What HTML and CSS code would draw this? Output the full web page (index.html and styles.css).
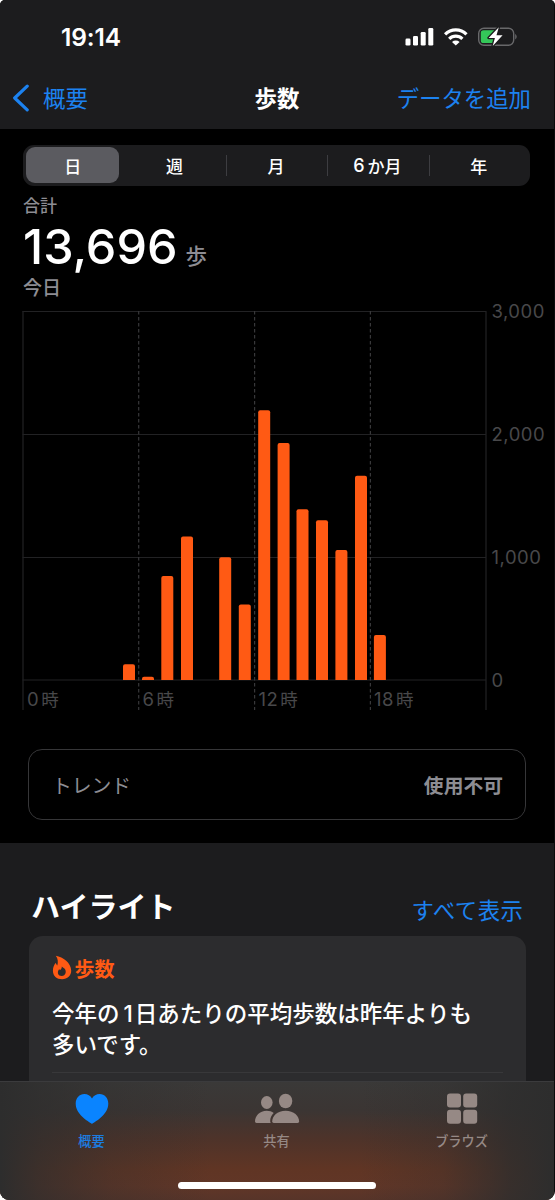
FILE: index.html
```html
<!DOCTYPE html>
<html lang="ja">
<head>
<meta charset="utf-8">
<meta name="viewport" content="width=device-width, initial-scale=1">
<title>歩数</title>
<link rel="stylesheet" href="styles.css">
</head>
<body>
<div class="app">
  <header class="header">
    <div class="status">
      <span class="clock">19:14</span>
      <svg class="status-icons" width="112" height="22" viewBox="405 26 112 22">
        <g fill="#fff">
          <rect x="405.5" y="38.6" width="5" height="7" rx="1.3"/>
          <rect x="413" y="36" width="5" height="9.600" rx="1.3"/>
          <rect x="420.700" y="32" width="5" height="13.600" rx="1.3"/>
          <rect x="428.300" y="28" width="5" height="17.600" rx="1.3"/>
        </g>
        <g fill="none" stroke="#fff" stroke-width="3.200">
          <path d="M445.100 34.300a15.300 15.300 0 0 1 21.400 0"/>
          <path d="M449.200 38.900a9.400 9.400 0 0 1 13.200 0"/>
        </g>
        <path d="M455.800 45.600l-3.800-3.700a5.600 5.600 0 0 1 7.600 0z" fill="#fff"/>
        <rect x="478.700" y="28.200" width="35" height="17" rx="5.200" fill="none" stroke="#68686a" stroke-width="1.400"/>
        <path d="M515.200 33.800q3 2.900 0 5.800z" fill="#68686a"/>
        <path d="M483.500 30.300h10.500v12.800h-10.500a2.700 2.700 0 0 1-2.700-2.700v-7.400a2.700 2.700 0 0 1 2.700-2.700z" fill="#34c759"/>
        <path d="M498.800 27.200l-10.200 10.700h6.300l-2.200 8 9.900-10.700h-6.100z" fill="#fff" stroke="#1c1c1e" stroke-width="2.600" paint-order="stroke" stroke-linejoin="round"/>
      </svg>
    </div>
    <nav class="navbar">
      <a class="back">
        <svg width="18" height="28" viewBox="0 0 18 28" fill="none" stroke="#1c82f0" stroke-width="3.200" stroke-linecap="round" stroke-linejoin="round"><path d="M15.200 2.200L2.700 14l12.500 11.800"/></svg>
        <span>概要</span>
      </a>
      <h1 class="title">歩数</h1>
      <a class="add">データを追加</a>
    </nav>
  </header>

  <main class="summary">
    <div class="segments">
      <span class="segment selected">日</span>
      <span class="segment">週</span>
      <span class="segment divided">月</span>
      <span class="segment divided"><span class="six">6</span>か月</span>
      <span class="segment divided">年</span>
    </div>
    <div class="total">
      <div class="total-label">合計</div>
      <div class="total-value"><span class="number">13,696</span><span class="unit">歩</span></div>
      <div class="total-date">今日</div>
    </div>

    <svg class="chart" width="554" height="417" viewBox="0 298 554 417">
      <g class="grid">
        <path d="M22.500 311.500H486M22.500 434.500H486M22.500 557.500H486M22.500 680H486"/>
        <path d="M23 311v399M486 311v399"/>
        <path class="dashed" d="M138.700 311v399M254.600 311v399M370.400 311v399"/>
      </g>
      <g class="bars">
        <path d="M123 680v-13.800q0-2 2-2h8q2 0 2 2v13.800z"/>
        <path d="M142 680v-1.200q0-2 2-2h8q2 0 2 2v1.200z"/>
        <path d="M161.300 680v-102q0-2 2-2h8q2 0 2 2v102z"/>
        <path d="M181 680v-141.500q0-2 2-2h8q2 0 2 2v141.500z"/>
        <path d="M219.200 680v-120.800q0-2 2-2h8q2 0 2 2v120.800z"/>
        <path d="M238.800 680v-73.500q0-2 2-2h8q2 0 2 2v73.500z"/>
        <path d="M258.200 680v-267.700q0-2 2-2h8q2 0 2 2v267.700z"/>
        <path d="M277.600 680v-235q0-2 2-2h8q2 0 2 2v235z"/>
        <path d="M296.500 680v-168.700q0-2 2-2h8q2 0 2 2v168.700z"/>
        <path d="M316 680v-157.800q0-2 2-2h8q2 0 2 2v157.800z"/>
        <path d="M335.400 680v-128q0-2 2-2h8q2 0 2 2v128z"/>
        <path d="M355 680v-202.200q0-2 2-2h8q2 0 2 2v202.200z"/>
        <path d="M373.900 680v-43q0-2 2-2h8q2 0 2 2v43z"/>
      </g>
      <g class="axis">
        <text x="491.500" y="318.300">3,000</text>
        <text x="491.500" y="441.300">2,000</text>
        <text x="491.500" y="564.300">1,000</text>
        <text x="491.500" y="687.300">0</text>
        <text x="27" y="705.500">0<tspan class="hour" dx="2">時</tspan></text>
        <text x="142.500" y="705.500">6<tspan class="hour" dx="2">時</tspan></text>
        <text x="258.500" y="705.500">12<tspan class="hour" dx="2">時</tspan></text>
        <text x="374" y="705.500">18<tspan class="hour" dx="2">時</tspan></text>
      </g>
    </svg>

    <div class="trend"><span>トレンド</span><strong>使用不可</strong></div>
  </main>

  <section class="highlights">
    <div class="section-head"><h2>ハイライト</h2><a>すべて表示</a></div>
    <article class="card">
      <div class="card-kind">
        <svg width="20" height="25" viewBox="52 955 20 25">
          <path fill="#ff5a14" fill-rule="evenodd" d="M55.800 955.800c7.400 1.200 15.200 7.300 15.400 14.700.1 5.300-3.800 8.700-9.100 8.700-5.400 0-9.200-3.500-9.200-8.500 0-3.200 1.200-6 3-7.900.2 1.300.7 2.100 1.400 2.700.9-3.400.8-6.600-1.500-9.700zM61.800 966.500c.1 2-.8 2.900-1.800 3.800-.4-.4-.6-.8-.7-1.300-2.700 3.400-1.300 7 2.500 7 3.900 0 5.200-4.700 2.600-7.400-1-.9-1.900-1.500-2.600-2.100z"/>
        </svg>
        <span>歩数</span>
      </div>
      <p>今年の<span class="digit">1</span>日あたりの平均歩数は昨年よりも<br>多いです。</p>
      <div class="card-rule"></div>
    </article>
  </section>

  <footer class="tabbar">
    <div class="tabs">
      <a class="tab active">
        <svg width="34" height="32" viewBox="0 0 34 32"><path fill="#0a84ff" d="M17 31C13 28.300.7 21.500.7 10.600.7 5 4.500 1 9.300 1c3.400 0 6.100 1.700 7.700 4.400C18.600 2.700 21.300 1 24.700 1c4.800 0 8.600 4 8.600 9.600C33.300 21.500 21 28.300 17 31z"/></svg>
        <span>概要</span>
      </a>
      <a class="tab">
        <svg width="46" height="32" viewBox="254 1093 46 32" fill="#968985">
          <ellipse cx="266.800" cy="1102.500" rx="5.800" ry="6.400"/>
          <ellipse cx="285.600" cy="1101" rx="6.700" ry="7.300"/>
          <path d="M255 1121.500c0-5.500 4.600-10.700 11.700-10.700 2.800 0 5.200.9 7 2.200-2.300 2.300-3.500 5.200-3.500 7.900 0 .8.200 1.500.5 2h-14.200q-1.500 0-1.500-1.400z"/>
          <path d="M272.200 1121.500c0-5.400 5-10.700 13.400-10.700s13.500 5.300 13.500 10.700q0 1.400-1.500 1.400h-23.900q-1.500 0-1.500-1.400z"/>
        </svg>
        <span>共有</span>
      </a>
      <a class="tab">
        <svg width="32" height="32" viewBox="0 0 32 32" fill="#968985"><rect x="1" y="0.500" width="14" height="14" rx="3"/><rect x="17.200" y="0.500" width="14" height="14" rx="3"/><rect x="1" y="16.700" width="14" height="14" rx="3"/><rect x="17.200" y="16.700" width="14" height="14" rx="3"/></svg>
        <span>ブラウズ</span>
      </a>
    </div>
    <div class="home-indicator"></div>
  </footer>
</div>
</body>
</html>
```
FILE: styles.css
```css
* { box-sizing: border-box; }
body {
  margin: 0;
  background: #fff;
  font-family: Inter, "Noto Sans CJK JP", sans-serif;
  color: #fff;
}
h1, h2, p { margin: 0; }
.app {
  width: 555px;
  height: 1200px;
  display: flex;
  flex-direction: column;
  overflow: hidden;
  background: #000;
  border-right: 1px solid #0b0b0c;
  border-radius: 5px 5px 9px 9px;
}
.header { height: 129px; flex: none; background: #1c1c1e; }
.status {
  height: 74px;
  display: flex;
  justify-content: space-between;
  align-items: center;
  padding: 0 37px 0 61px;
}
.clock { font-size: 24.500px; font-weight: 600; letter-spacing: -0.100px; }
.navbar {
  height: 50px;
  display: grid;
  grid-template-columns: 1fr auto 1fr;
  align-items: center;
  padding: 0 23px 0 12px;
  font-size: 22.400px;
  line-height: 30px;
  color: #1c82f0;
}
.back { display: flex; align-items: center; gap: 13px; }
.back svg { margin-top: -2px; }
.title { font-size: 22.400px; font-weight: 700; color: #fff; padding-left: 11px; }
.add { justify-self: end; white-space: nowrap; }

.summary { height: 714px; flex: none; padding-top: 16px; }
.segments {
  height: 41px;
  margin: 0 24px 0 23px;
  display: grid;
  grid-template-columns: repeat(5, 1fr);
  border-radius: 11px;
  background: #1c1c1e;
  font-size: 17px;
  font-weight: 500;
}
.segment { display: flex; align-items: center; justify-content: center; padding-right: 1px; }
.six { margin-right: 3px; font-size: 18px; }
.segment.selected {
  margin: 2px 5px 3px 3px;
  padding-right: 0;
  border-radius: 9px;
  background: #5b5b60;
}
.segment.divided {
  background: linear-gradient(#3d3d41, #3d3d41) left center / 1px 21px no-repeat;
}
.total { height: 112px; padding-left: 23px; color: #8d8d93; font-weight: 500; }
.total-label { height: 38px; line-height: 40px; font-size: 17px; }
.total-value { height: 44px; display: flex; align-items: baseline; line-height: 45px; }
.number { color: #fff; font-size: 48.500px; letter-spacing: 0; }
.unit { font-size: 21.500px; margin-left: 8px; }
.total-date { height: 30px; line-height: 41px; font-size: 19px; }

.chart { display: block; }
.grid path { fill: none; stroke: #222224; stroke-width: 1.200; }
.grid .dashed { stroke: #38383a; stroke-dasharray: 3.500 2.500; }
.bars { fill: #ff5a14; }
.axis { fill: #48484a; font-size: 18.500px; letter-spacing: 0.500px; }
.hour { font-size: 17.500px; }

.trend {
  height: 71px;
  margin: 34px 28px 0;
  padding: 0 22px 0 23px;
  display: flex;
  justify-content: space-between;
  align-items: center;
  border: 1.500px solid #363638;
  border-radius: 14px;
  color: #8d8d93;
  font-size: 19.800px;
}
.highlights { height: 238px; flex: none; background: #1c1c1e; overflow: hidden; }
.section-head {
  height: 93px;
  padding: 37px 31px 0 31px;
  display: flex;
  justify-content: space-between;
  align-items: flex-start;
}
.section-head h2 { font-size: 29px; line-height: 56px; font-weight: 700; }
.section-head a { font-size: 22.400px; line-height: 62px; letter-spacing: 0.500px; margin-right: -0.500px; color: #1c82f0; }
.card {
  height: 160px;
  margin: 0 28px 0 29px;
  padding: 18px 23px 0;
  border-radius: 14px;
  background: #2c2c2e;
}
.card-kind {
  height: 28px;
  display: flex;
  align-items: center;
  gap: 3px;
  color: #ff5a14;
  font-size: 20px;
  font-weight: 700;
}
.card-kind svg { margin-top: -1px; margin-left: -0.500px; }
.card p {
  margin-top: 16px;
  font-size: 22.500px;
  line-height: 31px;
  font-weight: 500;
  white-space: nowrap;
}
.digit { margin: 0 2px 0 4px; }
.card-rule { height: 1px; margin-top: 12px; background: #38383a; }

.tabbar {
  height: 119px;
  flex: none;
  padding-top: 11px;
  border-top: 1px solid #3b3b3d;
  background:
    linear-gradient(90deg, #2d2d2d 0, rgba(45, 45, 45, 0.700) 7%, rgba(45, 45, 45, 0.300) 20%, rgba(45, 45, 45, 0) 38%, rgba(45, 45, 45, 0) 65%, rgba(45, 45, 45, 0.250) 80%, rgba(45, 45, 45, 0.800) 92%, #2d2d2d 100%),
    linear-gradient(#3a3938 0, #3b3533 24%, #4d332a 47%, #603524 74%, #613627 88%, #573429 100%);
}
.tabs {
  height: 86px;
  margin-left: -1px;
  display: grid;
  grid-template-columns: repeat(3, 185px);
}
.tab {
  display: flex;
  flex-direction: column;
  align-items: center;
  font-size: 13.200px;
  line-height: 20px;
  font-weight: 500;
  color: #968985;
}
.tab span { margin-top: 6px; }
.tab.active { color: #1c7ce0; }
.home-indicator {
  width: 198px;
  height: 7px;
  margin: 3px auto 0;
  border-radius: 4px;
  background: #fff;
}
```
